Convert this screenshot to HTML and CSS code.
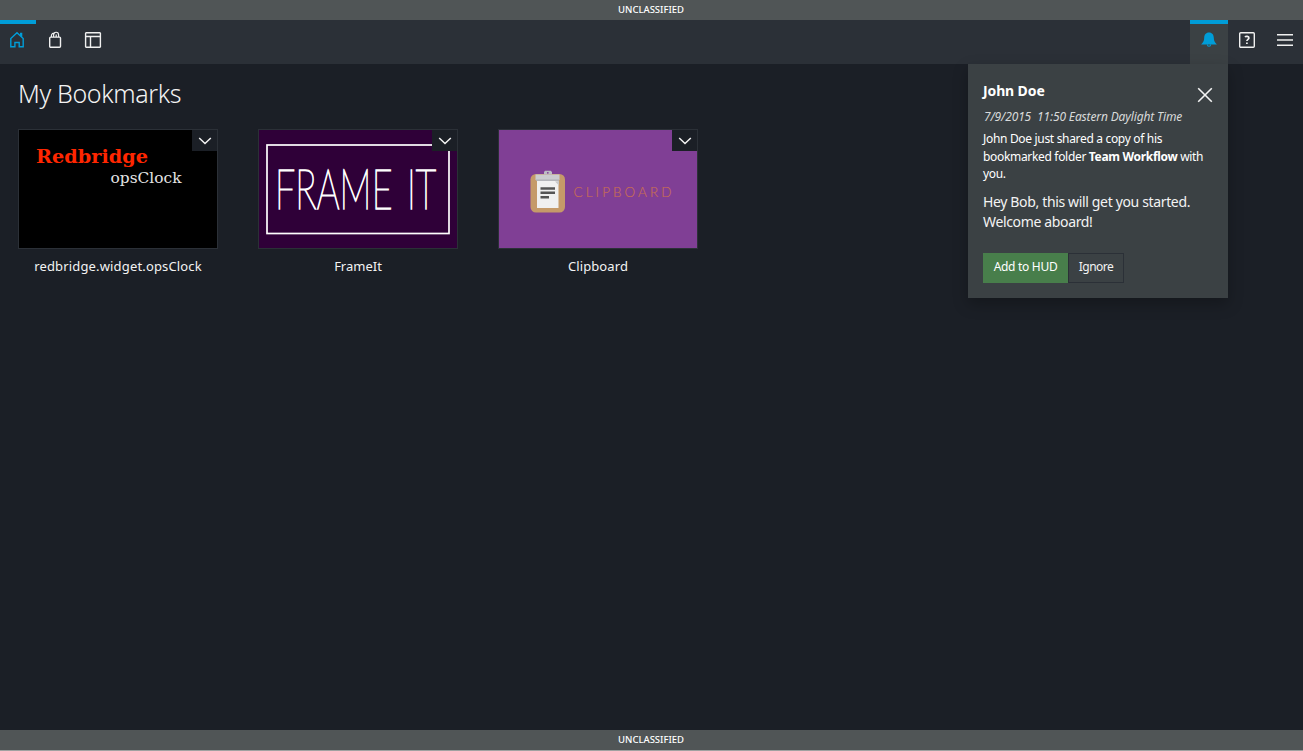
FILE: index.html
```html
<!DOCTYPE html>
<html lang="en">
<head>
<meta charset="utf-8">
<title>My Bookmarks</title>
<link rel="stylesheet" href="styles.css">
</head>
<body>
<div class="banner">UNCLASSIFIED</div>
<header class="navbar">
  <nav class="nav-group">
    <a class="nav-item home active"><svg width="16" height="18" viewBox="0 0 16 18"><path d="M1.8 7.6 8 1.8 14.2 7.6v8.1h-4v-4.2H5.9v4.2H1.8zM11.7 5V2.4h.9V6" fill="none" stroke="currentColor" stroke-width="1.4"/></svg></a>
    <a class="nav-item"><svg width="14" height="18" viewBox="0 0 14 18"><rect x="1.7" y="6.1" width="10.8" height="10.2" rx="1" fill="none" stroke="currentColor" stroke-width="1.4"/><path d="M3.4 6V4.8a2.4 2.8 0 0 1 3.4-2.4M5.6 6V4a2 2.2 0 0 1 5 0V6M8.2 6V3.4" fill="none" stroke="currentColor" stroke-width="1.2"/></svg></a>
    <a class="nav-item"><svg width="18" height="18" viewBox="0 0 18 18"><path d="M2.2 1.7h13.6l.6.6v13.4l-.6.6H2.2l-.6-.6V2.3zM1.6 5.5h14.8M6.5 5.5v10.8" fill="none" stroke="currentColor" stroke-width="1.4"/></svg></a>
  </nav>
  <nav class="nav-group right">
    <a class="nav-item active alert"><svg width="18" height="18" viewBox="0 0 18 18"><path d="M9 1.5C5.8 1.5 4.3 3.8 4.2 6.8 4.1 10 3.2 11.6 1.1 13.6h15.8c-2.1-2-3-3.6-3.1-6.8C13.7 3.8 12.2 1.5 9 1.5z" fill="currentColor"/><path d="M7.4 13.4a1.6 1.9 0 0 0 3.2 0" fill="none" stroke="currentColor" stroke-width="1.1"/></svg></a>
    <a class="nav-item"><svg width="18" height="18" viewBox="0 0 18 18"><rect x="1.7" y="1.7" width="14.6" height="14.6" rx="1" fill="none" stroke="currentColor" stroke-width="1.4"/><path d="M6.9 5.9c1-.9 4-.9 4 1 0 1.4-2 1.5-2 3.2M8.9 11.4v1.6" fill="none" stroke="currentColor" stroke-width="1.7"/></svg></a>
    <a class="nav-item"><svg width="18" height="18" viewBox="0 0 18 18"><path d="M1 3.8h16M1 9h16M1 14.2h16" stroke="currentColor" stroke-width="1.5"/></svg></a>
  </nav>
</header>
<main class="content">
  <h1 class="title">My Bookmarks</h1>
  <div class="cards">
    <article class="card">
      <div class="thumb black">
        <svg width="198" height="118" viewBox="0 0 198 118"><text class="redbridge" x="17" y="33" textLength="112" lengthAdjust="spacingAndGlyphs">Redbridge</text><text class="ops" x="91.5" y="52.5" textLength="71" lengthAdjust="spacingAndGlyphs">opsClock</text></svg>
        <button class="drop"><svg width="14" height="8" viewBox="0 0 14 8"><path d="M1.2 1l5.8 5.5L12.8 1" fill="none" stroke="currentColor" stroke-width="1.5"/></svg></button>
      </div>
      <div class="caption c1">redbridge.widget.opsClock</div>
    </article>
    <article class="card">
      <div class="thumb plum">
        <svg width="198" height="118" viewBox="0 0 198 118"><rect x="8" y="15" width="182" height="88.5" fill="none" stroke="#fff" stroke-width="1.7"/><text class="frame" transform="translate(16 78.5) scale(.65 1)" textLength="248" lengthAdjust="spacing">FRAME IT</text></svg>
        <button class="drop"><svg width="14" height="8" viewBox="0 0 14 8"><path d="M1.2 1l5.8 5.5L12.8 1" fill="none" stroke="currentColor" stroke-width="1.5"/></svg></button>
      </div>
      <div class="caption c2">FrameIt</div>
    </article>
    <article class="card">
      <div class="thumb violet">
        <svg width="198" height="118" viewBox="0 0 198 118"><rect x="31.5" y="44" width="34.5" height="38.5" rx="5.5" fill="#c59a69"/><path d="M38 50h21.5V78H38z" fill="#f0f0f0"/><path d="M56 51.5l4 4V51z" fill="#c9c9c9"/><path d="M36.5 44.5h24v4.8l-1.5 1.7H38l-1.5-1.7z" fill="#cbcccf"/><path d="M37 49.5h23v1.3H37z" fill="#aeb0b4"/><path d="M45 44.5V42l1-1.2h5.7l1.3 1.2v2.5z" fill="#bdbec4"/><circle cx="48.8" cy="42.8" r=".9" fill="#803f98"/><path d="M41.5 58.5H56M41.5 62.8H56M41.5 67.2H50" stroke="#555" stroke-width="2.5"/><text class="clip" x="74.5" y="67" textLength="98" lengthAdjust="spacing">CLIPBOARD</text></svg>
        <button class="drop"><svg width="14" height="8" viewBox="0 0 14 8"><path d="M1.2 1l5.8 5.5L12.8 1" fill="none" stroke="currentColor" stroke-width="1.5"/></svg></button>
      </div>
      <div class="caption c3">Clipboard</div>
    </article>
  </div>
</main>
<footer class="banner bottom">UNCLASSIFIED</footer>
<aside class="notice">
  <button class="close"><svg width="16" height="16" viewBox="0 0 16 16"><path d="M1.2 1.2l13.6 13.6M14.8 1.2L1.2 14.8" stroke="currentColor" stroke-width="1.6"/></svg></button>
  <h2 class="sender">John Doe</h2>
  <div class="date">7/9/2015 &nbsp;11:50 Eastern Daylight Time</div>
  <div class="shared">John Doe just shared a copy of his<br>bookmarked folder <b>Team Workflow</b> with<br>you.</div>
  <div class="message">Hey Bob, this will get you started.<br>Welcome aboard!</div>
  <div class="actions"><button class="add">Add to HUD</button><button class="ignore">Ignore</button></div>
</aside>
</body>
</html>
```
FILE: styles.css
```css
* { box-sizing: border-box; }
body {
  margin: 0;
  height: 751px;
  display: flex;
  flex-direction: column;
  overflow: hidden;
  background: #1b1f26;
  color: #f3f3f3;
  font-family: "Noto Sans", "Open Sans", sans-serif;
}
svg { display: block; }
button { font-family: inherit; color: inherit; padding: 0; border: 0; background: none; }
.banner {
  flex: none;
  height: 20px;
  line-height: 19px;
  background: #505556;
  color: #fff;
  font-size: 9.5px;
  letter-spacing: -0.02px;
  padding-right: 1px;
  font-weight: 500;
  text-align: center;
}
.bottom { height: 21px; border-bottom: 1px solid #a0a2a1; }
.navbar {
  flex: none;
  display: flex;
  justify-content: space-between;
  height: 44px;
  background: #2b3037;
}
.nav-group { display: flex; }
.right { margin-right: -1px; }
.nav-item {
  width: 38px;
  border-top: 4px solid transparent;
  padding-top: 7px;
  display: flex;
  justify-content: center;
  color: #f0f0f0;
}
.home { width: 36px; padding-right: 2px; }
.active { border-color: #009dd8; color: #009dd8; }
.alert { background: #3b4144; }
.content { flex: 1; padding: 12px 18px; }
.title { margin: 0 0 18px; height: 35px; font-size: 25px; line-height: 35px; font-weight: 300; letter-spacing: -0.36px; }
.cards { display: flex; gap: 40px; }
.card { width: 200px; }
.thumb { position: relative; height: 120px; border: 1px solid #2b3037; }
.black { background: #000; }
.plum { background: #2f0038; }
.violet { background: #803f95; }
.drop {
  position: absolute;
  top: 0;
  right: 0;
  width: 25px;
  height: 21px;
  display: flex;
  align-items: center;
  justify-content: center;
  background: #1b1f26;
}
.caption { margin-top: 8px; font-size: 13px; line-height: 19px; text-align: center; white-space: nowrap; }
.c1 { letter-spacing: 0.16px; }
.c3 { letter-spacing: 0.1px; }
.redbridge { font: bold 19px "DejaVu Serif", serif; fill: #ff2600; }
.ops { font: 14.5px "DejaVu Serif", serif; fill: #e4e4e4; }
.frame { font: 100 55px Lato, sans-serif; word-spacing: 6px; fill: #fff; stroke: #fff; stroke-width: 1.6px; }
.clip { font: 300 13.5px Lato, sans-serif; fill: #c46c58; stroke: #c46c58; stroke-width: 0.2px; }
.notice {
  position: absolute;
  left: 968px;
  top: 64px;
  width: 260px;
  height: 234px;
  padding: 16px 15px 15px;
  background: #3b4144;
  box-shadow: 0 6px 14px rgba(0, 0, 0, 0.25);
  white-space: nowrap;
}
.close { position: absolute; right: 15px; top: 23px; }
.sender { margin: 0; font-size: 14px; line-height: 22px; letter-spacing: -0.12px; color: #fff; }
.date { margin-top: 5px; padding-left: 1px; font-size: 12px; line-height: 20px; font-style: italic; letter-spacing: -0.14px; color: #d8dada; }
.shared { margin-top: 3px; font-size: 12px; line-height: 17.5px; letter-spacing: -0.32px; color: #fff; }
.message { margin-top: 9px; font-size: 14px; line-height: 20px; letter-spacing: -0.35px; }
.actions { display: flex; margin-top: 21px; }
.actions button { height: 30px; font-size: 12px; line-height: 26px; padding-bottom: 2px; letter-spacing: -0.3px; }
.add { width: 85px; background: #487e4b; color: #fff; }
.actions .ignore { width: 56px; border: 1px solid #2b3037; line-height: 26px; letter-spacing: -0.5px; }
```
